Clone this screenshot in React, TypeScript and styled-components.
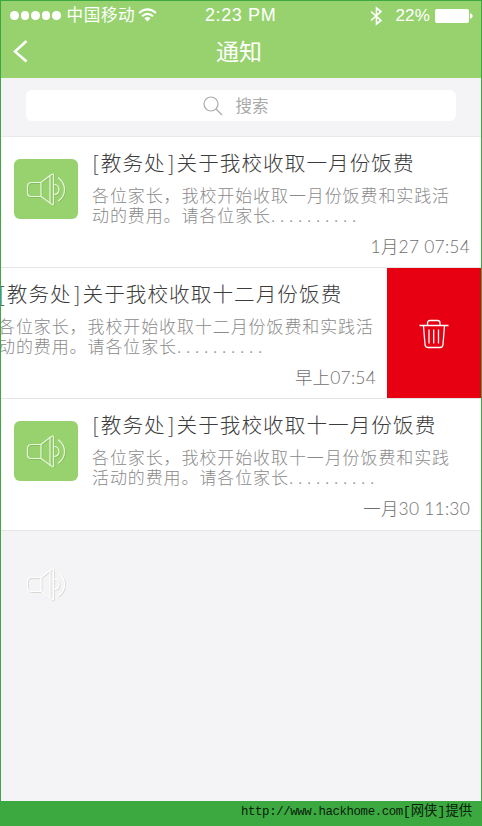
import React from "react";
import styled, { createGlobalStyle } from "styled-components";

const GlobalStyle = createGlobalStyle`
  * { box-sizing: border-box; }
  body { margin: 0; overflow: hidden; }
`;

const Page = styled.div`
  width: 482px;
  height: 826px;
  display: flex;
  flex-direction: column;
  background: #3ba940;
  font-family: "Liberation Sans", "Noto Sans CJK SC", sans-serif;
`;

const Screen = styled.main`
  height: 801px;
  margin: 0 1px;
  padding-top: 1px;
  overflow: hidden;
  background: linear-gradient(#3ba940 1px, #f4f4f6 1px);
`;

const Header = styled.header`
  height: 77px;
  background: #98d26f;
  color: #fff;
`;

const StatusBar = styled.div`
  height: 29px;
  display: grid;
  grid-template-columns: 195px 1fr auto;
  align-items: center;
  padding: 0 8px 0 9px;
  font-size: 17px;
`;

const StatusGroup = styled.div`
  display: flex;
  align-items: center;
  white-space: nowrap;
`;

const SignalDots = styled.div`
  display: flex;
  gap: 2px;
  margin-right: 6px;
`;

const Dot = styled.i`
  width: 8.5px;
  height: 8.5px;
  border-radius: 50%;
  background: #fff;
`;

const Carrier = styled.span`
  font-size: 16.6px;
  line-height: 29px;
  letter-spacing: 0.6px;
  margin-right: 3px;
`;

const Clock = styled.span`
  font-size: 18px;
  letter-spacing: 0.6px;
  line-height: 29px;
`;

const Percent = styled.span`
  margin: 0 5px 0 12px;
  letter-spacing: 0.2px;
`;

const NavBar = styled.div`
  height: 48px;
  display: grid;
  grid-template-columns: 40px 1fr 40px;
  align-items: start;
  padding: 0 4px 0 0;
`;

const BackButton = styled.button`
  display: flex;
  padding: 9px 0 0 12px;
  border: 0;
  background: none;
`;

const PageTitle = styled.h1`
  margin: 0;
  text-align: center;
  font-size: 23px;
  font-weight: 400;
  line-height: 45px;
`;

const SearchArea = styled.div`
  height: 59px;
  padding: 12px 25px 0;
  border-bottom: 1px solid #e9e9eb;
`;

const SearchField = styled.div`
  height: 31px;
  display: flex;
  justify-content: center;
  align-items: center;
  gap: 13px;
  padding-right: 11px;
  border-radius: 6px;
  background: #fff;
  color: #aaa;
  font-size: 16.5px;
  line-height: 31px;
`;

const SearchLabel = styled.span`
  padding-top: 2px;
`;

const Row = styled.article<{ $height: number }>`
  display: flex;
  height: ${(p) => p.$height}px;
  border-bottom: 1px solid #e5e5e6;
  background: #fff;
  overflow: hidden;
`;

const RowContent = styled.div<{ $swiped?: boolean }>`
  flex: none;
  display: flex;
  width: 480px;
  margin-left: ${(p) => (p.$swiped ? -94 : 0)}px;
`;

const Badge = styled.div`
  flex: none;
  width: 64px;
  height: 60px;
  display: flex;
  justify-content: center;
  align-items: center;
  margin: 22px 13px 0 13px;
  padding-top: 2px;
  border-radius: 6px;
  background: #98d26f;
`;

const Message = styled.div`
  flex: 1;
  display: flex;
  flex-direction: column;
  padding-right: 11px;
  white-space: nowrap;
`;

const MessageTitle = styled.h2`
  margin: 9px 0 0 -1px;
  font-family: "Noto Sans CJK SC", sans-serif;
  font-size: 20.6px;
  letter-spacing: 1.05px;
  line-height: 32px;
  font-weight: 300;
  color: #3c3c3c;
`;

const Bracket = styled.span`
  display: inline-block;
  width: 10.8px;
  letter-spacing: 0;
  text-align: center;
`;

const MessageBody = styled.p`
  margin: 7px 0 0 1px;
  font-family: "Noto Sans CJK SC", sans-serif;
  font-size: 17px;
  letter-spacing: 0.9px;
  line-height: 20.3px;
  font-weight: 300;
  color: #8a8a8a;
`;

const Line = styled.span`
  display: block;
`;

const Ellipsis = styled.span`
  letter-spacing: 4.75px;
`;

const Time = styled.time`
  align-self: flex-end;
  margin-top: 7px;
  font-family: Lato, "Noto Sans CJK SC", sans-serif;
  font-size: 17.4px;
  line-height: 28px;
  letter-spacing: 0.25px;
  font-weight: 300;
  color: #707070;
`;

const DeleteButton = styled.button`
  flex: none;
  width: 94px;
  display: flex;
  justify-content: center;
  align-items: center;
  padding: 2px 0 0 0;
  border: 0;
  background: #e60012;
`;

const EmptyArea = styled.div`
  padding: 36px 0 0 25px;
`;

const Footer = styled.footer`
  height: 25px;
  display: flex;
  justify-content: flex-end;
  padding-right: 10px;
  font-family: "Liberation Mono", "Noto Sans CJK SC", monospace;
  font-size: 12px;
  line-height: 21px;
  color: #0a200b;
  white-space: nowrap;
`;

const Url = styled.span`
  font-size: 12.4px;
  line-height: 22px;
  letter-spacing: -0.4px;
`;

const Credit = styled.span`
  font-size: 13.3px;
`;

const SpeakerShape = () => (
  <>
    <path d="M15 10.500H5.500Q1.500 10.500 1.500 14.500V20.500Q1.500 24.500 5.500 24.500H15Z" />
    <path d="M15 10.500L24 3.500L26 2.200Q27.500 1.500 27.500 3.500V31.500Q27.500 33.500 26 32.600L24 31L15 24.500" />
    <path d="M24 4V31" />
    <path d="M27.500 12.500Q33 12.500 33 17.500T27.500 22.500" />
    <path d="M32.500 6C40.500 12 40.500 23 32.500 29" />
  </>
);

const Speaker = ({ color, shadow }: { color: string; shadow: string }) => (
  <svg width="41" height="36" viewBox="0 0 41 36" fill="none" strokeWidth="1.200" strokeLinecap="round">
    <g stroke={shadow} transform="translate(.8 .8)"><SpeakerShape /></g>
    <g stroke={color}><SpeakerShape /></g>
  </svg>
);

const Wifi = () => (
  <svg width="19" height="15" viewBox="0 0 19 15" fill="none" stroke="#fff" strokeWidth="2.100">
    <path d="M1 5Q9.500-2.200 18 5M4 8.200Q9.500 3.500 15 8.200" />
    <path d="M6.400 10.200Q9.500 7.600 12.600 10.200L9.500 13.600Z" fill="#fff" stroke="none" />
  </svg>
);

const Bluetooth = () => (
  <svg width="13" height="20" viewBox="0 0 13 20" fill="none" stroke="#fff" strokeWidth="1.600">
    <path d="M1 5.500L11 14.500L6.500 18V2L11 5.500L1 14.500" />
  </svg>
);

const Battery = () => (
  <svg width="38" height="14" viewBox="0 0 38 14" fill="#fff">
    <rect width="34" height="14" rx="2" />
    <path d="M35 4Q40.500 7 35 10Z" />
  </svg>
);

const Trash = () => (
  <svg width="30" height="30" viewBox="0 0 30 30" fill="none" stroke="#fff" strokeWidth="1.300">
    <path d="M.5 6.500H29.500M8.500 6V4Q8.500 1.500 11 1.500H18.500Q21 1.500 21 4V6" />
    <path d="M4.500 7L6 25.500Q6.200 28.500 9 28.500H21Q23.800 28.500 24 25.500L25.500 7M10 10.500V24.500M14.700 10.500V24.500M19.500 10.500V24.500" />
  </svg>
);

type Notice = { month: string; lines: string[]; time: string; height: number; swiped?: boolean };

const notices: Notice[] = [
  { month: "一月份", lines: ["各位家长，我校开始收取一月份饭费和实践活", "动的费用。请各位家长"], time: "1月27 07:54", height: 131 },
  { month: "十二月份", lines: ["各位家长，我校开始收取十二月份饭费和实践活", "动的费用。请各位家长"], time: "早上07:54", height: 131, swiped: true },
  { month: "十一月份", lines: ["各位家长，我校开始收取十一月份饭费和实践", "活动的费用。请各位家长"], time: "一月30 11:30", height: 132 },
];

const NoticeRow = ({ notice }: { notice: Notice }) => (
  <Row $height={notice.height}>
    <RowContent $swiped={notice.swiped}>
      <Badge><Speaker color="#e9f7de" shadow="#84bd5c" /></Badge>
      <Message>
        <MessageTitle>
          <Bracket>[</Bracket>教务处<Bracket>]</Bracket>关于我校收取{notice.month}饭费
        </MessageTitle>
        <MessageBody>
          <Line>{notice.lines[0]}</Line>
          <Line>{notice.lines[1]}<Ellipsis>..........</Ellipsis></Line>
        </MessageBody>
        <Time>{notice.time}</Time>
      </Message>
    </RowContent>
    {notice.swiped && <DeleteButton aria-label="删除"><Trash /></DeleteButton>}
  </Row>
);

export default function App() {
  return (
    <Page>
      <GlobalStyle />
      <Screen>
        <Header>
          <StatusBar>
            <StatusGroup>
              <SignalDots><Dot /><Dot /><Dot /><Dot /><Dot /></SignalDots>
              <Carrier>中国移动</Carrier>
              <Wifi />
            </StatusGroup>
            <Clock>2:23 PM</Clock>
            <StatusGroup><Bluetooth /><Percent>22%</Percent><Battery /></StatusGroup>
          </StatusBar>
          <NavBar>
            <BackButton aria-label="返回">
              <svg width="16" height="24" viewBox="0 0 16 24" fill="none" stroke="#fff" strokeWidth="2.500">
                <path d="M13.500 2L2 12.500L13.500 22.500" />
              </svg>
            </BackButton>
            <PageTitle>通知</PageTitle>
          </NavBar>
        </Header>
        <SearchArea>
          <SearchField>
            <svg width="20" height="20" viewBox="0 0 20 20" fill="none" stroke="#aaa" strokeWidth="1.200">
              <circle cx="8" cy="8" r="7" />
              <path d="M13 13L19 19" />
            </svg>
            <SearchLabel>搜索</SearchLabel>
          </SearchField>
        </SearchArea>
        {notices.map((n) => <NoticeRow key={n.month} notice={n} />)}
        <EmptyArea><Speaker color="#ffffff" shadow="#d8d8d2" /></EmptyArea>
      </Screen>
      <Footer><Url>http://www.hackhome.com</Url><Credit>[网侠]提供</Credit></Footer>
    </Page>
  );
}
